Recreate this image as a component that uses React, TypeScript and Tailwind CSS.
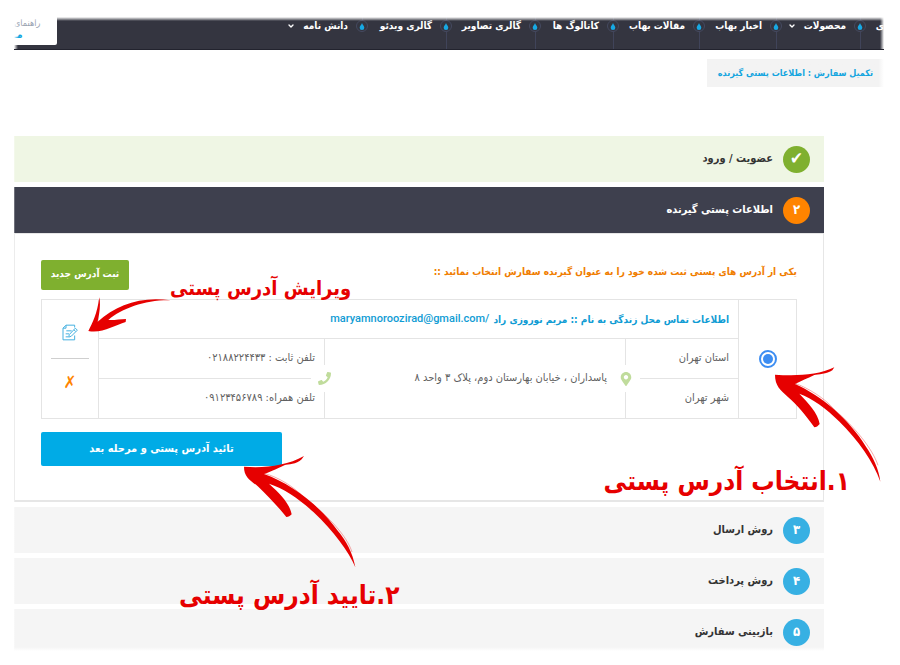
import { useState } from 'react';
import { ChevronDown } from 'lucide-react';
import { FaMapMarkerAlt, FaPhone } from 'react-icons/fa';

const NAV_ITEMS = [
  { label: 'محصولات', hasMenu: true, width: 'w-[84px]' },
  { label: 'اخبار بهاب', hasMenu: false, width: 'w-[77px]' },
  { label: 'مقالات بهاب', hasMenu: false, width: 'w-[86px]' },
  { label: 'کاتالوگ ها', hasMenu: false, width: 'w-[78px]' },
  { label: 'گالری تصاویر', hasMenu: false, width: 'w-[89px]' },
  { label: 'گالری ویدئو', hasMenu: false, width: 'w-[84px]' },
  { label: 'دانش نامه', hasMenu: true, width: 'w-[84px]' },
];

const NEXT_STEPS = [
  { number: '۳', title: 'روش ارسال' },
  { number: '۴', title: 'روش پرداخت' },
  { number: '۵', title: 'بازبینی سفارش' },
];

const Drop = () => (
  <span className="flex size-3 shrink-0 items-center justify-center rounded-full border border-[#454a60] bg-[#343540]">
    <svg viewBox="0 0 10 12" className="h-[7px] w-[6px] shrink-0 fill-[#17a8e3]">
      <path d="M5 0C5.600 3 9 4.800 9 8A4 4 0 0 1 1 8C1 4.800 4.400 3 5 0Z" />
    </svg>
  </span>
);

const EditIcon = () => (
  <svg viewBox="0 0 48 50" className="h-[17px] w-4" fill="none" stroke="#45b1e0" strokeWidth="3" strokeLinejoin="round">
    <path d="M38 10V3H12L3 12V47H38V34" />
    <path d="M12 3V12H3" />
    <path d="M13 20H29M11 29H21M11 38H18" />
    <path d="M40 12L46 18L28 36L20 39L22 31Z" />
    <path d="M36 17L41 22" />
  </svg>
);

const Header = () => (
  <header className="relative flex h-[33px] overflow-hidden border-b border-[#22232e] bg-[#343540]">
    <nav className="flex pr-[18px] text-white">
      {NAV_ITEMS.map((item, index) => (
        <div key={item.label} className={`flex shrink-0 ${item.width}`}>
          <div className="flex w-3 shrink-0 flex-col items-center">
            <span className="h-[3px] w-px shrink-0 bg-[#40445a]" />
            <Drop />
            {index < 6 && <span className="w-px grow bg-[#40445a]" />}
          </div>
          <a href="#" className="flex h-[18px] items-center gap-2 pr-2 text-[10px] leading-4 font-bold whitespace-nowrap">
            {item.label}
            {item.hasMenu && <ChevronDown className="size-2" strokeWidth={4} />}
          </a>
        </div>
      ))}
    </nav>
    <a href="#" className="absolute top-px right-0 text-[10px] leading-4 font-bold text-white">ی</a>
    <div className="absolute top-0 left-0 flex h-7 w-[43px] flex-col items-end rounded-br-xs bg-white text-[9px] leading-3 whitespace-nowrap">
      <span className="text-gray-400">راهنمای</span>
      <span className="text-[10px] font-bold text-[#13a5df]">مـ</span>
    </div>
    <div className="pointer-events-none absolute inset-x-0 top-0 h-1 bg-linear-to-b from-white to-transparent" />
    <div className="pointer-events-none absolute inset-y-0 right-0 w-1 bg-linear-to-l from-white to-transparent" />
    <div className="pointer-events-none absolute inset-y-0 left-0 w-1 bg-linear-to-r from-white to-transparent" />
  </header>
);

type StepBarProps = {
  badge: string;
  title: string;
  barClass: string;
  badgeClass: string;
};

const StepBar = ({ badge, title, barClass, badgeClass }: StepBarProps) => (
  <h2 className={`flex h-[46px] items-center gap-[10px] px-[14px] text-[11px] font-bold ${barClass}`}>
    <span className={`flex size-[27px] items-center justify-center rounded-full text-white ${badgeClass}`}>{badge}</span>
    {title}
  </h2>
);

const AddressCard = () => {
  const [selected, setSelected] = useState(true);

  return (
    <div className="mt-[9px] flex h-[120px] border border-[#e4e4e4] text-[11px] text-[#5f5f5f]">
      <div className="flex w-[57px] items-center justify-center">
        <input
          type="radio"
          name="address"
          aria-label="انتخاب آدرس"
          checked={selected}
          onChange={() => setSelected(true)}
          className="size-[18px] appearance-none rounded-full border-2 border-[#3c8df2] bg-clip-content p-[2px] checked:bg-[#3c8df2]"
        />
      </div>
      <div className="flex min-w-0 grow flex-col border-x border-[#e4e4e4]">
        <p className="flex h-[39px] items-center gap-1 border-b border-[#e4e4e4] px-[9px] text-[10px] font-bold whitespace-nowrap text-[#109cd4]">
          <span>اطلاعات تماس محل زندگی به نام :: مریم نوروزی راد</span>
          <bdi className="font-[Roboto] text-[11px] font-medium">maryamnoroozirad@gmail.com/</bdi>
        </p>
        <div className="flex grow">
          <div className="relative w-[113px] shrink-0 border-l border-[#e4e4e4]">
            <p className="flex h-[39px] items-center px-[9px]">استان تهران</p>
            <div className="ml-[14px] h-px bg-[#e4e4e4]" />
            <p className="flex h-[38px] items-center px-[9px]">شهر تهران</p>
            <span className="absolute top-[26px] -left-2 flex h-[27px] w-4 items-center justify-center bg-white">
              <FaMapMarkerAlt className="size-[14px] text-[#c0dc9c]" />
            </span>
          </div>
          <p className="flex grow items-center px-[18px] whitespace-nowrap">پاسداران ، خیابان بهارستان دوم، پلاک ۳ واحد ۸</p>
          <div className="relative w-[226px] shrink-0 border-r border-[#e4e4e4]">
            <p className="flex h-[39px] items-center px-[9px]">تلفن ثابت : ۰۲۱۸۸۲۲۴۴۳۳</p>
            <div className="mr-[13px] h-px bg-[#e4e4e4]" />
            <p className="flex h-[38px] items-center px-[9px]">تلفن همراه: ۰۹۱۲۳۴۵۶۷۸۹</p>
            <span className="absolute top-[26px] -right-2 flex h-[27px] w-4 items-center justify-center bg-white">
              <FaPhone className="size-[13px] text-[#c0dc9c]" />
            </span>
          </div>
        </div>
      </div>
      <div className="flex w-[56px] flex-col items-center px-[9px]">
        <button type="button" aria-label="ویرایش" className="flex h-[58px] items-center pt-[6px]">
          <EditIcon />
        </button>
        <span className="h-px w-full bg-[#cfcfcf]" />
        <button type="button" aria-label="حذف" className="h-12 text-[17px] font-bold text-[#ff8400]">
          ✗
        </button>
      </div>
    </div>
  );
};

const Notes = () => (
  <div className="pointer-events-none text-[#e60000]">
    <p className="absolute top-[463px] right-[50px] text-[26px] leading-9 font-bold whitespace-nowrap">۱.انتخاب آدرس پستی</p>
    <p className="absolute top-[577px] left-[179px] text-[26px] leading-9 font-bold whitespace-nowrap">۲.تایید آدرس پستی</p>
    <p className="absolute top-[270px] left-[170px] text-[20px] leading-9 font-bold whitespace-nowrap">ویرایش آدرس پستی</p>
    <svg viewBox="0 0 330 354" className="absolute top-[365px] right-[19px] h-[118px] w-[110px] fill-current">
      <path d="M12 29C70 33 140 32 190 7L184 16C168 28 140 28 130 30C108 40 92 48 72 57C150 91 235 163 285 245C307 278 323 310 328 350C308 292 262 226 204 169C166 130 124 101 85 86C111 113 141 144 146 177C141 183 136 187 130 187C104 150 77 118 50 95C28 75 12 62 12 29Z" />
      <path d="M72 55C110 68 165 102 190 134M190 134C250 185 304 250 321 301" fill="none" stroke="currentColor" strokeWidth="1" />
    </svg>
    <svg viewBox="0 0 345 354" className="absolute top-[456px] left-[243px] h-[118px] w-[115px] fill-current">
      <path d="M3 32C62 37 130 30 183 0L176 10C160 26 136 24 124 28C98 40 83 48 63 54C143 82 229 147 283 223C310 255 329 290 337 334C318 288 271 224 212 169C169 129 123 97 78 83C110 112 140 142 146 175C142 180 136 183 130 183C104 150 74 119 46 92C20 72 3 62 3 32Z" />
      <path d="M63 52C106 63 155 93 186 128M201 139C258 184 311 239 327 288" fill="none" stroke="currentColor" strokeWidth="1" />
    </svg>
    <svg viewBox="0 0 252 111" className="absolute top-[296px] left-[88px] h-[37px] w-[84px] fill-current">
      <path d="M1 105C14 80 27 55 34 4C39 29 33 56 29 77C86 27 157 0 248 13C174 11 103 36 61 72C80 73 97 69 114 69L113 78C80 88 42 113 1 105Z" />
    </svg>
  </div>
);

const App: React.FC = () => (
  <div
    dir="rtl"
    lang="fa"
    className="relative min-h-screen overflow-hidden bg-white pt-[17px] pr-4 pb-[10px] pl-[14px] font-['DejaVu_Sans_Condensed','DejaVu_Sans',sans-serif]"
  >
    <Header />
    <div className="mt-[9px] flex">
      <a href="#" className="bg-[#f3f3f3] bg-linear-to-l from-white to-[#f3f3f3] to-3% px-[11px] text-[9px] leading-7 font-bold text-[#13a5df]">
        تکمیل سفارش : اطلاعات پستی گیرنده
      </a>
    </div>
    <main className="relative mt-[49px] mr-[60px] flex flex-col gap-[5px]">
      <StepBar badge="✔" title="عضویت / ورود" barClass="bg-[#eff6e4] text-[#333]" badgeClass="bg-[#7fb02f] text-[17px]" />
      <section>
        <StepBar badge="۲" title="اطلاعات پستی گیرنده" barClass="bg-[#3e404e] text-white" badgeClass="bg-[#ff8400] text-[13px]" />
        <div className="border border-b-2 border-[#e6e6e6] px-[26px] pt-[26px] pb-[34px]">
          <div className="flex items-start justify-between">
            <p className="text-[10px] leading-6 font-bold text-[#f07d00]">
              یکی از آدرس های پستی ثبت شده خود را به عنوان گیرنده سفارش انتخاب نمائید ::
            </p>
            <button type="button" className="h-[30px] w-[88px] rounded-xs bg-[#7fb02f] pb-[3px] text-[10px] font-bold whitespace-nowrap text-white">
              ثبت آدرس جدید
            </button>
          </div>
          <AddressCard />
          <div className="mt-[13px] flex justify-end">
            <button type="button" className="h-[34px] w-[241px] rounded-xs bg-[#00abe6] text-[11px] font-bold text-white">
              تائید آدرس پستی و مرحله بعد
            </button>
          </div>
        </div>
      </section>
      {NEXT_STEPS.map((step) => (
        <StepBar key={step.number} badge={step.number} title={step.title} barClass="bg-[#f5f5f5] text-[#333]" badgeClass="bg-[#37b0e3] text-[13px]" />
      ))}
      <div className="pointer-events-none absolute inset-x-0 bottom-0 h-2 bg-linear-to-t from-white from-50% to-transparent" />
      <div className="pointer-events-none absolute inset-y-0 left-0 w-px bg-linear-to-r from-white/50 to-transparent" />
    </main>
    <Notes />
  </div>
);

export default App;
